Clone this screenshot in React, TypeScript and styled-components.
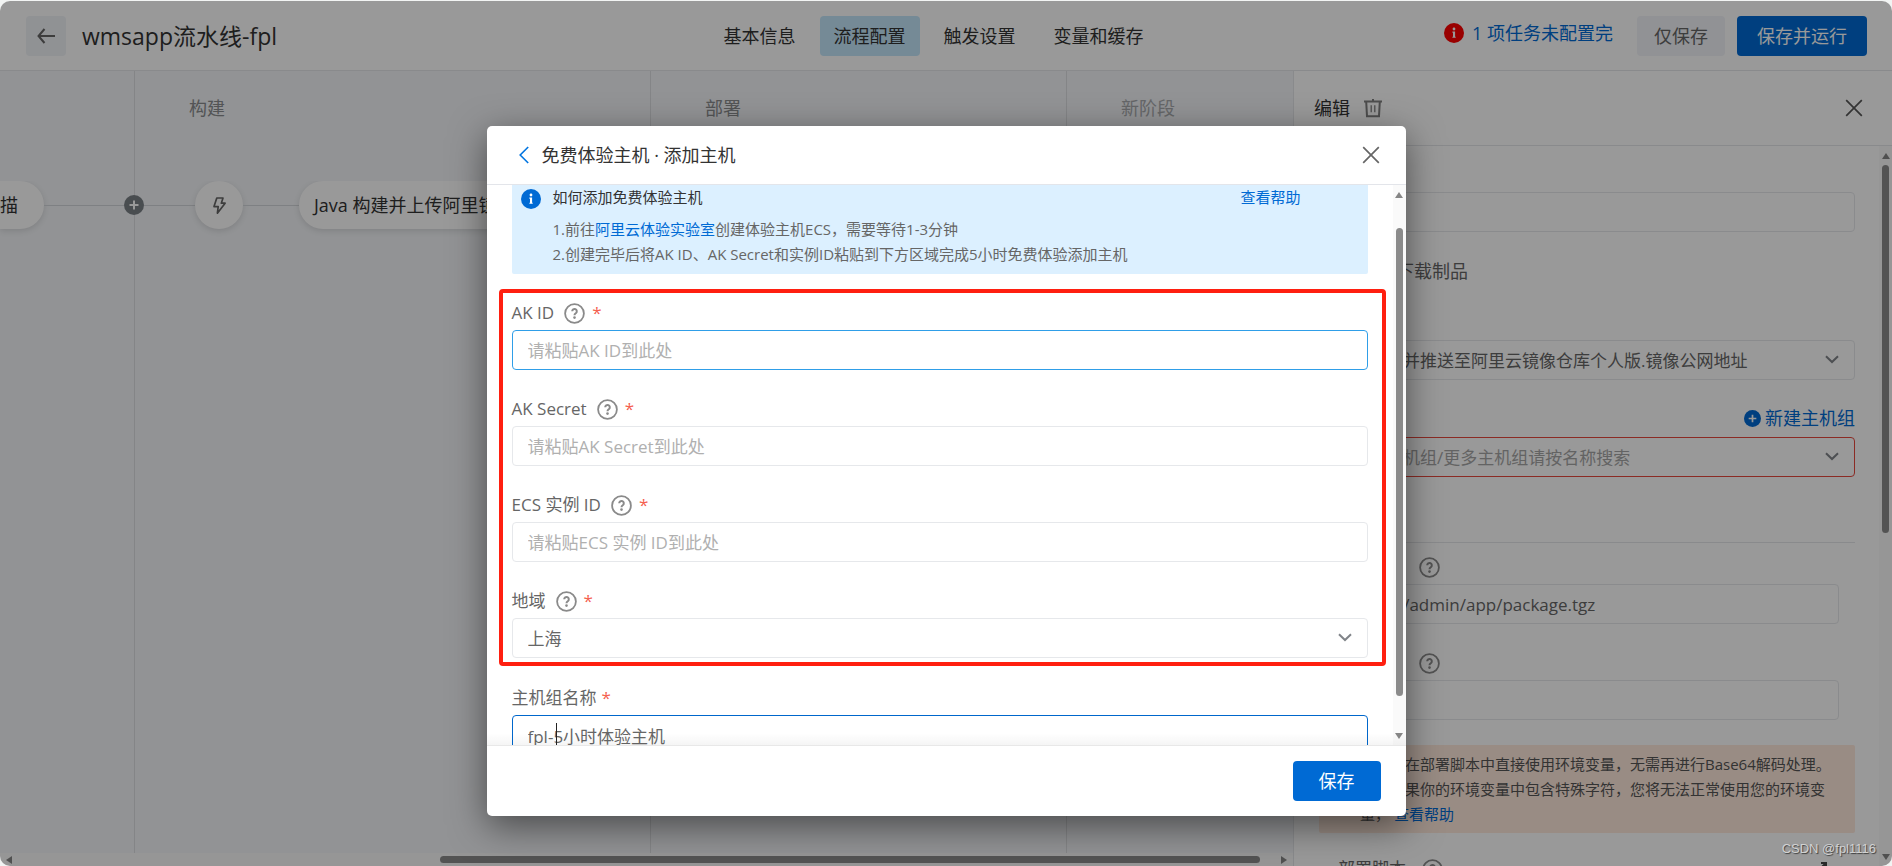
import React from "react";
import styled, { createGlobalStyle, css } from "styled-components";

const GlobalStyle = createGlobalStyle`
  *, *::before, *::after { box-sizing: border-box; }
  html, body { margin: 0; height: 100%; background: #f2f4f3; }
  body, button, input, select {
    font-family: "Open Sans", "Noto Sans CJK SC", sans-serif;
    font-size: 18px;
    line-height: 24px;
  }
  a { color: #006ad4; text-decoration: none; }
  button { cursor: pointer; border: 0; padding: 0; background: none; color: inherit; }
`;

/* ---------- page shell ---------- */

const Shell = styled.div`
  position: relative;
  display: flex;
  flex-direction: column;
  height: calc(100vh - 1px);
  margin-top: 1px;
  border-radius: 10px;
  overflow: hidden;
  background: #fff;
  color: #333;
`;

const TopBar = styled.header`
  display: grid;
  grid-template-columns: 1fr auto 1fr;
  align-items: center;
  flex: none;
  height: 70px;
  padding: 0 25px 0 26px;
  border-bottom: 1px solid #e4e6ea;
`;

const TopLeft = styled.div`
  display: flex;
  align-items: center;
  gap: 16px;
`;

const BackButton = styled.button`
  display: flex;
  align-items: center;
  justify-content: center;
  width: 40px;
  height: 40px;
  border-radius: 4px;
  background: #f0f3f7;
  color: #666;
`;

const PageTitle = styled.h1`
  margin: 0;
  font-size: 23px;
  line-height: 32px;
  font-weight: 400;
`;

const Tabs = styled.nav`
  display: flex;
  gap: 10px;
  margin-right: 26px;
`;

const Tab = styled.a<{ $active?: boolean }>`
  padding: 8px 14px;
  border-radius: 4px;
  color: #333;
  background: ${(p) => (p.$active ? "#c3e6fb" : "transparent")};
`;

const TopRight = styled.div`
  display: flex;
  align-items: center;
  justify-content: flex-end;
  gap: 12px;
`;

const Warning = styled.a`
  display: flex;
  align-items: center;
  gap: 8px;
  margin-right: 12px;
  padding-bottom: 5px;
`;

const ActionButton = styled.button<{ $primary?: boolean }>`
  height: 40px;
  min-width: 88px;
  padding: 0 20px;
  border-radius: 4px;
  ${(p) =>
    p.$primary
      ? css`
          background: #006ad4;
          color: #fff;
        `
      : css`
          padding: 0 16px;
          background: #f2f4f8;
          color: #666;
        `}
`;

const Workspace = styled.main`
  display: flex;
  flex: 1;
  min-height: 0;
`;

/* ---------- pipeline canvas ---------- */

const Canvas = styled.section`
  position: relative;
  display: flex;
  flex-direction: column;
  flex: 1;
  min-width: 0;
  background: #f3f5f8;
`;

const Stages = styled.div`
  display: flex;
  flex: 1;
  min-height: 0;
`;

const Stage = styled.div<{ $width?: number; $muted?: boolean }>`
  flex: ${(p) => (p.$width ? `0 0 ${p.$width}px` : "1 1 0")};
  padding: 25px 0 0 54px;
  color: ${(p) => (p.$muted ? "#a9abae" : "#8a8c8e")};
  & + & {
    border-left: 1px solid #dcdee2;
  }
`;

const Pipeline = styled.div`
  position: absolute;
  top: 110px;
  left: 0;
  right: 0;
  display: flex;
  align-items: center;
  overflow: hidden;
  padding-bottom: 16px;
`;

const Wire = styled.div<{ $width: number }>`
  flex: 0 0 ${(p) => p.$width}px;
  height: 1px;
  background: #d3d6da;
`;

const Job = styled.div<{ $round?: boolean; $cut?: boolean }>`
  display: flex;
  align-items: center;
  justify-content: ${(p) => (p.$round ? "center" : "flex-start")};
  flex: none;
  width: ${(p) => (p.$round ? "48px" : "auto")};
  height: 48px;
  padding: ${(p) => (p.$round ? "0" : p.$cut ? "0 26px 0 0" : "0 24px 0 15px")};
  border-radius: ${(p) => (p.$cut ? "0 24px 24px 0" : "24px")};
  background: #fff;
  box-shadow: 0 2px 6px rgba(0, 0, 0, 0.12);
  white-space: nowrap;
`;

/* ---------- scrollbars ---------- */

const VTrack = styled.div`
  display: flex;
  flex-direction: column;
  align-items: center;
  flex: 0 0 13px;
  padding: 7px 0 6px;
  background: #fafafa;
`;

const VThumb = styled.div<{ $before: number; $length: number }>`
  flex: ${(p) => p.$length} 1 0;
  width: 7px;
  margin-top: ${(p) => p.$before}px;
  border-radius: 4px;
  background: #8b8b8b;
`;

const VRest = styled.div<{ $length: number }>`
  flex: ${(p) => p.$length} 1 0;
`;

const HTrack = styled.div`
  display: flex;
  align-items: center;
  justify-content: space-between;
  flex: 0 0 13px;
  padding: 0 6px;
  background: #fafafa;
`;

const HRail = styled.div`
  display: flex;
  flex: 1;
  padding-right: 21px;
  &::before {
    content: "";
    flex: 428;
  }
`;

const HThumb = styled.div`
  flex: 819;
  height: 7px;
  border-radius: 4px;
  background: #8b8b8b;
`;

/* ---------- settings panel ---------- */

const Panel = styled.aside`
  display: flex;
  flex-direction: column;
  flex: 0 0 599px;
  border-left: 1px solid #e4e6ea;
  background: #fff;
`;

const PanelHeader = styled.div`
  display: flex;
  align-items: center;
  flex: none;
  gap: 13px;
  height: 75px;
  padding: 0 29px 0 20px;
  border-bottom: 1px solid #e4e6ea;
`;

const PanelClose = styled.button`
  display: flex;
  margin-left: auto;
  color: #555;
`;

const PanelMain = styled.div`
  display: flex;
  flex: 1;
  min-height: 0;
`;

const PanelForm = styled.form`
  flex: 1;
  min-width: 0;
  overflow: hidden;
  padding: 46px 24px 0 25px;
`;

const Choice = styled.label`
  display: flex;
  align-items: center;
  gap: 10px;
  margin: 27px 0 57px;
  padding-left: 16px;
  color: #666;
  input { width: 16px; height: 16px; margin: 0 17px 0 0; }
`;

const AddRow = styled.div`
  display: flex;
  justify-content: flex-end;
  margin: 26px 0 7px;
`;

const AddLink = styled.a`
  display: flex;
  align-items: center;
  gap: 4px;
`;

const Divider = styled.hr`
  margin: 65px 0 12px;
  border: 0;
  border-top: 1px solid #e4e6ea;
`;

const Nested = styled.div`
  display: flex;
  flex-direction: column;
  gap: 27px;
  padding: 0 16px;
`;

const Notice = styled.div`
  margin: 25px 0 24px;
  padding: 7px 20px 6px 41px;
  border-radius: 2px;
  background: #ffe9dc;
  color: #555;
  font-size: 15px;
  line-height: 25px;
  white-space: nowrap;
`;

const ScriptRow = styled.div`
  display: flex;
  align-items: center;
  padding: 0 28px 0 19px;
  svg:last-child { margin-left: auto; }
`;

/* ---------- form parts ---------- */

const FieldBox = styled.div`
  display: flex;
  flex-direction: column;
  gap: 5px;
`;

const LabelRow = styled.div<{ $wide?: boolean }>`
  display: flex;
  align-items: center;
  gap: ${(p) => (p.$wide ? "16px" : "10px")};
  height: 24px;
  font-size: 17px;
  color: #666;
`;

const Star = styled.span<{ $tight?: boolean }>`
  margin-left: ${(p) => (p.$tight ? "-5px" : "-3px")};
  color: #f5604f;
`;

const Control = styled.div`
  position: relative;
`;

type Tone = "plain" | "hover" | "focus" | "error";
const toneColor: Record<Tone, string> = {
  plain: "#e6e8eb",
  hover: "#2f9ee8",
  focus: "#0067cc",
  error: "#e8493d",
};

const controlStyle = css<{ $tone?: Tone; $faded?: boolean }>`
  display: block;
  width: 100%;
  height: 40px;
  padding: 1px 15px 0;
  border: 1px solid ${(p) => toneColor[p.$tone ?? "plain"]};
  border-radius: 4px;
  outline: none;
  background: #fff;
  color: ${(p) => (p.$faded ? "#a6a6a6" : "#666")};
  font-size: 17px;
  &::placeholder { color: #b0b0b0; opacity: 1; }
`;

const TextInput = styled.input`
  ${controlStyle}
`;

const SelectInput = styled.select`
  ${controlStyle}
  appearance: none;
  padding-right: 48px;
`;

const ChevronMark = styled.svg`
  position: absolute;
  right: 16px;
  top: 12px;
  pointer-events: none;
`;

const Caret = styled.i`
  position: absolute;
  left: 44px;
  top: 8px;
  width: 1px;
  height: 24px;
  background: #222;
`;

/* ---------- dialog ---------- */

const Backdrop = styled.div`
  position: absolute;
  inset: 0;
  display: flex;
  justify-content: center;
  align-items: flex-start;
  padding: 125px 16px 50px;
  background: rgba(0, 0, 0, 0.4);
`;

const Dialog = styled.div`
  display: flex;
  flex-direction: column;
  width: 100%;
  max-width: 919px;
  height: 100%;
  border-radius: 5px;
  overflow: hidden;
  background: #fff;
  box-shadow: 0 10px 36px rgba(0, 0, 0, 0.5);
`;

const DialogHeader = styled.div`
  display: flex;
  align-items: center;
  flex: none;
  gap: 13px;
  height: 59px;
  padding: 0 26px 0 32px;
  border-bottom: 1px solid #e3e5ea;
  button { display: flex; color: #666; }
`;

const DialogTitle = styled.h2`
  flex: 1;
  margin: 0;
  font-size: 18px;
  font-weight: 400;
  line-height: 24px;
`;

const DialogMain = styled.div`
  position: relative;
  display: flex;
  flex: 1;
  min-height: 0;
  &::after {
    content: "";
    position: absolute;
    left: 0;
    right: 0;
    bottom: 0;
    height: 12px;
    background: linear-gradient(rgba(0, 0, 0, 0), rgba(0, 0, 0, 0.04));
  }
`;

const DialogForm = styled.form`
  flex: 1;
  min-width: 0;
  overflow: hidden;
  padding: 0 25px;
`;

const Guide = styled.div`
  display: grid;
  grid-template-columns: 20px 1fr auto;
  column-gap: 12px;
  padding: 0 67px 7px 9px;
  border-radius: 0 0 2px 2px;
  background: #dcf0ff;
  font-size: 15px;
  line-height: 25px;
  svg { margin-top: 4px; }
`;

const Steps = styled.ol`
  grid-column: 2 / 4;
  margin: 7px 0 0;
  padding: 0;
  list-style: none;
  color: #666;
`;

const Highlighted = styled.div`
  position: relative;
  display: flex;
  flex-direction: column;
  gap: 27px;
  margin: 27px 0 28px;
  &::after {
    content: "";
    position: absolute;
    inset: -12px -18px -8px -13px;
    border: 4px solid #ff1f10;
    border-radius: 4px;
    pointer-events: none;
  }
`;

const DialogFooter = styled.div`
  display: flex;
  align-items: center;
  justify-content: flex-end;
  flex: none;
  height: 71px;
  padding: 0 25px;
  border-top: 1px solid #e8e8e8;
`;

const Watermark = styled.span`
  position: absolute;
  right: 16px;
  bottom: 7px;
  font-family: "Liberation Sans", sans-serif;
  font-size: 13px;
  line-height: 20px;
  color: #d2d2d2;
  text-shadow: 1px 1px 1px rgba(0, 0, 0, 0.6);
`;

/* ---------- icons ---------- */

const InfoIcon = ({ color }: { color: string }) => (
  <svg width="20" height="20" viewBox="0 0 20 20">
    <circle cx="10" cy="10" r="10" fill={color} />
    <circle cx="10" cy="6" r="1.4" fill="#fff" />
    <path d="M8.4 8.6h2.7v5.1h.6v1.1H8.4v-1.1h.6v-4h-.6z" fill="#fff" />
  </svg>
);

const HelpIcon = () => (
  <svg width="21" height="21" viewBox="0 0 21 21" fill="none" stroke="#8a8a8a">
    <circle cx="10.5" cy="10.5" r="9.4" strokeWidth="1.8" />
    <path d="M8.2 8.3a2.3 2.3 0 1 1 3.8 1.7c-.9.7-1.5 1-1.5 2.2" strokeWidth="2" />
    <circle cx="10.5" cy="14.6" r="1.3" fill="#8a8a8a" stroke="none" />
  </svg>
);

const PlusIcon = ({ size, color }: { size: number; color: string }) => (
  <svg width={size} height={size} viewBox="0 0 20 20" style={{ flex: "none" }}>
    <circle cx="10" cy="10" r="10" fill={color} />
    <path d="M10 5.5v9M5.5 10h9" stroke="#fff" strokeWidth="2" />
  </svg>
);

const CloseIcon = () => (
  <svg width="18" height="18" viewBox="0 0 18 18" fill="none" stroke="currentColor" strokeWidth="1.7">
    <path d="M1.2 1.2l15.6 15.6M16.8 1.2L1.2 16.8" />
  </svg>
);

const ArrowLeft = () => (
  <svg width="18" height="16" viewBox="0 0 18 16" fill="none" stroke="currentColor" strokeWidth="2">
    <path d="M1 8h17M7.5 1L1.5 8l6 7" />
  </svg>
);

const TrashIcon = () => (
  <svg width="20" height="20" viewBox="0 0 20 20" fill="none" stroke="#808080" strokeWidth="2">
    <path d="M1 3.4h18M10 1v2" />
    <path d="M3.2 3.6l.8 14.6h12l.8-14.6" />
    <path d="M8.2 7.2v7M11.8 7.2v7" strokeWidth="1.3" />
  </svg>
);

const BoltIcon = () => (
  <svg width="16" height="19" viewBox="0 0 16 19" fill="none" stroke="#666" strokeWidth="1.7" strokeLinejoin="round">
    <path d="M5.8 2h6.2L10.3 7.2h3.8L6.4 17.2l.8-6.6H3z" />
  </svg>
);

const Chevron = () => (
  <ChevronMark width="14" height="14" viewBox="0 0 14 14" fill="none" stroke="#808489" strokeWidth="2">
    <path d="M1 4.2l6 5.8 6-5.8" />
  </ChevronMark>
);

const Triangle = ({ dir }: { dir: "up" | "down" | "left" | "right" }) => {
  const shape = {
    up: "4,0 8,6 0,6",
    down: "0,0 8,0 4,6",
    left: "0,4 6,0 6,8",
    right: "0,0 6,4 0,8",
  }[dir];
  const upright = dir === "up" || dir === "down";
  return (
    <svg width={upright ? 8 : 6} height={upright ? 6 : 8} style={{ flex: "none" }}>
      <polygon points={shape} fill="#868686" />
    </svg>
  );
};

/* ---------- composed parts ---------- */

interface FieldProps {
  id: string;
  label: string;
  help?: boolean;
  required?: boolean;
  wide?: boolean;
  children: React.ReactNode;
}

const Field = ({ id, label, help, required, wide, children }: FieldProps) => (
  <FieldBox>
    <LabelRow $wide={wide}>
      <label htmlFor={id}>{label}</label>
      {help && <HelpIcon />}
      {required && <Star $tight={!help}>*</Star>}
    </LabelRow>
    <Control>{children}</Control>
  </FieldBox>
);

const tabs = ["基本信息", "流程配置", "触发设置", "变量和缓存"];

export default function App() {
  return (
    <>
      <GlobalStyle />
      <Shell>
        <TopBar>
          <TopLeft>
            <BackButton aria-label="返回">
              <ArrowLeft />
            </BackButton>
            <PageTitle>wmsapp流水线-fpl</PageTitle>
          </TopLeft>
          <Tabs>
            {tabs.map((t) => (
              <Tab key={t} href="#" $active={t === "流程配置"}>
                {t}
              </Tab>
            ))}
          </Tabs>
          <TopRight>
            <Warning href="#">
              <InfoIcon color="#ff0000" />
              1 项任务未配置完
            </Warning>
            <ActionButton>仅保存</ActionButton>
            <ActionButton $primary>保存并运行</ActionButton>
          </TopRight>
        </TopBar>

        <Workspace>
          <Canvas>
            <Stages>
              <Stage $width={134} />
              <Stage $width={516}>构建</Stage>
              <Stage $width={416}>部署</Stage>
              <Stage $muted>新阶段</Stage>
            </Stages>
            <Pipeline>
              <Job $cut>描</Job>
              <Wire $width={80} />
              <PlusIcon size={20} color="#7a8086" />
              <Wire $width={51} />
              <Job $round>
                <BoltIcon />
              </Job>
              <Wire $width={56} />
              <Job>Java 构建并上传阿里镜像</Job>
            </Pipeline>
            <HTrack>
              <Triangle dir="left" />
              <HRail>
                <HThumb />
              </HRail>
              <Triangle dir="right" />
            </HTrack>
          </Canvas>

          <Panel>
            <PanelHeader>
              编辑
              <TrashIcon />
              <PanelClose aria-label="关闭编辑">
                <CloseIcon />
              </PanelClose>
            </PanelHeader>
            <PanelMain>
              <PanelForm>
                <TextInput aria-label="任务名称" />
                <Choice>
                  <input type="radio" name="artifact" />
                  不下载制品
                </Choice>
                <Control>
                  <SelectInput aria-label="制品">
                    <option>镜像构建并推送至阿里云镜像仓库个人版.镜像公网地址</option>
                  </SelectInput>
                  <Chevron />
                </Control>
                <AddRow>
                  <AddLink href="#">
                    <PlusIcon size={17} color="#006ad4" />
                    新建主机组
                  </AddLink>
                </AddRow>
                <Control>
                  <SelectInput aria-label="主机组" $tone="error" $faded>
                    <option>请选择主机组/更多主机组请按名称搜索</option>
                  </SelectInput>
                  <Chevron />
                </Control>
                <Divider />
                <Nested>
                  <Field id="path" label="下载路径" help wide>
                    <TextInput id="path" defaultValue="/home/admin/app/package.tgz" />
                  </Field>
                  <Field id="user" label="执行用户" help wide>
                    <TextInput id="user" />
                  </Field>
                </Nested>
                <Notice>
                  您可以在部署脚本中直接使用环境变量，无需再进行Base64解码处理。
                  <br />
                  但是如果你的环境变量中包含特殊字符，您将无法正常使用您的环境变
                  <br />
                  量， <a href="#">查看帮助</a>
                </Notice>
                <ScriptRow>
                  <LabelRow $wide>
                    部署脚本
                    <HelpIcon />
                  </LabelRow>
                  <svg width="14" height="14" viewBox="0 0 14 14" fill="none" stroke="#444" strokeWidth="2">
                    <path d="M8 1h5v5M6 13H1V8M13 1L8 6M1 13l5-5" />
                  </svg>
                </ScriptRow>
              </PanelForm>
              <VTrack>
                <Triangle dir="up" />
                <VThumb $before={6} $length={367} />
                <VRest $length={321} />
                <Triangle dir="down" />
              </VTrack>
            </PanelMain>
          </Panel>
        </Workspace>

        <Backdrop>
          <Dialog role="dialog" aria-modal="true" aria-labelledby="dialog-title">
            <DialogHeader>
              <button aria-label="返回上一步">
                <svg width="10" height="18" viewBox="0 0 10 18" fill="none" stroke="#0074e0" strokeWidth="1.6">
                  <path d="M9.2 1L1.2 9l8 8" />
                </svg>
              </button>
              <DialogTitle id="dialog-title">免费体验主机 · 添加主机</DialogTitle>
              <button aria-label="关闭">
                <CloseIcon />
              </button>
            </DialogHeader>
            <DialogMain>
              <DialogForm>
                <Guide>
                  <InfoIcon color="#006ad4" />
                  <span>如何添加免费体验主机</span>
                  <a href="#">查看帮助</a>
                  <Steps>
                    <li>
                      1.前往<a href="#">阿里云体验实验室</a>创建体验主机ECS，需要等待1-3分钟
                    </li>
                    <li>2.创建完毕后将AK ID、AK Secret和实例ID粘贴到下方区域完成5小时免费体验添加主机</li>
                  </Steps>
                </Guide>
                <Highlighted>
                  <Field id="ak-id" label="AK ID" help required>
                    <TextInput id="ak-id" $tone="hover" placeholder="请粘贴AK ID到此处" />
                  </Field>
                  <Field id="ak-secret" label="AK Secret" help required>
                    <TextInput id="ak-secret" placeholder="请粘贴AK Secret到此处" />
                  </Field>
                  <Field id="ecs-id" label="ECS 实例 ID" help required>
                    <TextInput id="ecs-id" placeholder="请粘贴ECS 实例 ID到此处" />
                  </Field>
                  <Field id="region" label="地域" help required>
                    <SelectInput id="region">
                      <option>上海</option>
                    </SelectInput>
                    <Chevron />
                  </Field>
                </Highlighted>
                <Field id="group" label="主机组名称" required>
                  <TextInput id="group" $tone="focus" defaultValue="fpl-5小时体验主机" />
                  <Caret />
                </Field>
              </DialogForm>
              <VTrack>
                <Triangle dir="up" />
                <VThumb $before={30} $length={467} />
                <VRest $length={37} />
                <Triangle dir="down" />
              </VTrack>
            </DialogMain>
            <DialogFooter>
              <ActionButton $primary>保存</ActionButton>
            </DialogFooter>
          </Dialog>
        </Backdrop>
        <Watermark>CSDN @fpl1116</Watermark>
      </Shell>
    </>
  );
}
